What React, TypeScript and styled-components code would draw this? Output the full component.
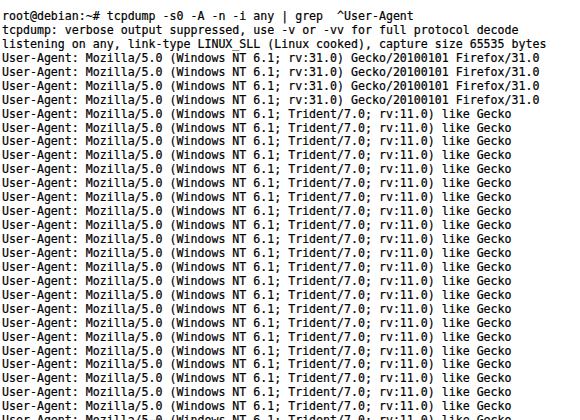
import React from "react";
import styled, { createGlobalStyle } from "styled-components";

const Global = createGlobalStyle`
  html, body {
    margin: 0;
    padding: 0;
    background: #ffffff;
    overflow: hidden;
  }
`;

const Terminal = styled.div`
  width: 580px;
  height: 420px;
  box-sizing: border-box;
  padding: 10px 0 0 2px;
  background: #ffffff;
  overflow: hidden;
  display: flex;
  flex-direction: column;
`;

const Line = styled.div`
  font-family: "DejaVu Sans Mono", "Liberation Mono", monospace;
  font-size: 11.6px;
  line-height: 13.94px;
  height: 13.94px;
  flex: none;
  white-space: pre;
  color: #000000;
  -webkit-text-stroke: 0.2px #000000;
`;

const FF =
  "User-Agent: Mozilla/5.0 (Windows NT 6.1; rv:31.0) Gecko/20100101 Firefox/31.0";
const IE =
  "User-Agent: Mozilla/5.0 (Windows NT 6.1; Trident/7.0; rv:11.0) like Gecko";

const lines: string[] = [
  "root@debian:~# tcpdump -s0 -A -n -i any | grep  ^User-Agent",
  "tcpdump: verbose output suppressed, use -v or -vv for full protocol decode",
  "listening on any, link-type LINUX_SLL (Linux cooked), capture size 65535 bytes",
  ...Array(4).fill(FF),
  ...Array(23).fill(IE),
];

export default function App() {
  return (
    <>
      <Global />
      <Terminal>
        {lines.map((l, i) => (
          <Line key={i}>{l}</Line>
        ))}
      </Terminal>
    </>
  );
}
